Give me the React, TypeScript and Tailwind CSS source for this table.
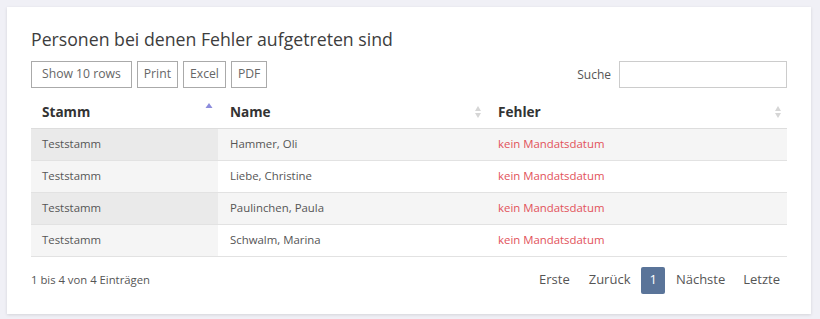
const rows = [
  { stamm: "Teststamm", name: "Hammer, Oli", fehler: "kein Mandatsdatum" },
  { stamm: "Teststamm", name: "Liebe, Christine", fehler: "kein Mandatsdatum" },
  { stamm: "Teststamm", name: "Paulinchen, Paula", fehler: "kein Mandatsdatum" },
  { stamm: "Teststamm", name: "Schwalm, Marina", fehler: "kein Mandatsdatum" },
];

function SortBoth() {
  return (
    <svg width="8" height="14" viewBox="0 0 8 14" className="shrink-0">
      <path d="M4 1 L7 6 H1 Z" fill="#d6d6d6" />
      <path d="M4 13 L7 8 H1 Z" fill="#d6d6d6" />
    </svg>
  );
}

function SortAsc() {
  return (
    <svg width="8" height="14" viewBox="0 0 8 14" className="shrink-0 -translate-y-[3px]">
      <path d="M4 1 L7.5 6 H0.5 Z" fill="#8c8cdc" />
    </svg>
  );
}

export default function App() {
  return (
    <div
      className="min-h-[319px] bg-[#f0f0f6] py-[7px] pl-[7px] pr-[9px]"
      style={{ fontFamily: '"Open Sans", "Noto Sans", sans-serif' }}
    >
      <div className="bg-white px-6 pt-[20px] pb-[20px] shadow-[0_1px_3px_rgba(0,0,0,0.12)]">
        <h2 className="text-[17.7px] font-medium leading-[25px] text-[#3d3d3d]">
          Personen bei denen Fehler aufgetreten sind
        </h2>

        <div className="mt-[9px] flex items-center justify-between">
          <div className="flex gap-[5px]">
            <button
              type="button"
              className="h-[27px] border border-[#aaa] bg-white px-[10px] text-[12.2px] text-[#666]"
            >
              Show 10 rows
            </button>
            {["Print", "Excel", "PDF"].map((b) => (
              <button
                key={b}
                type="button"
                className="h-[27px] border border-[#aaa] bg-white px-[6px] text-[12.2px] text-[#666]"
              >
                {b}
              </button>
            ))}
          </div>
          <label className="flex items-center gap-[8px] text-[12px] text-[#555]">
            Suche
            <input
              type="text"
              className="h-[27px] w-[168px] border border-[#ccc] bg-white outline-none"
            />
          </label>
        </div>

        <table className="mt-[8px] w-full border-collapse text-left">
          <thead>
            <tr className="h-[32px] border-b border-[#ddd]">
              <th className="w-[187px] pl-[11px] pr-[5px] text-[13.6px] font-bold text-[#333]">
                <div className="flex items-center justify-between">
                  Stamm
                  <SortAsc />
                </div>
              </th>
              <th className="w-[270px] pl-[12px] pr-[6px] text-[13.6px] font-bold text-[#333]">
                <div className="flex items-center justify-between">
                  Name
                  <SortBoth />
                </div>
              </th>
              <th className="pl-[10px] pr-[5px] text-[13.6px] font-bold text-[#333]">
                <div className="flex items-center justify-between">
                  Fehler
                  <SortBoth />
                </div>
              </th>
            </tr>
          </thead>
          <tbody className="text-[11.4px] text-[#555]">
            {rows.map((r, i) => (
              <tr
                key={r.name}
                className={`h-[32px] border-b border-[#e2e2e2] ${i % 2 === 0 ? "bg-[#f5f5f5]" : "bg-white"}`}
              >
                <td className={`pl-[11px] ${i % 2 === 0 ? "bg-[#eaeaea]" : "bg-[#f5f5f5]"}`}>
                  {r.stamm}
                </td>
                <td className="pl-[12px]">{r.name}</td>
                <td className="pl-[10px] text-[#e2525a]">{r.fehler}</td>
              </tr>
            ))}
          </tbody>
        </table>

        <div className="mt-[10px] flex items-center justify-between">
          <div className="text-[11.3px] text-[#555]">1 bis 4 von 4 Einträgen</div>
          <div className="flex items-center gap-[3px] text-[13px] text-[#555]">
            <span className="flex h-[27px] items-center px-[8px]">Erste</span>
            <span className="flex h-[27px] items-center px-[8px]">Zurück</span>
            <span className="flex h-[27px] items-center rounded-[2px] bg-[#5a7499] px-[8px] text-white">
              1
            </span>
            <span className="flex h-[27px] items-center px-[8px]">Nächste</span>
            <span className="flex h-[27px] items-center px-[7px]">Letzte</span>
          </div>
        </div>
      </div>
    </div>
  );
}
